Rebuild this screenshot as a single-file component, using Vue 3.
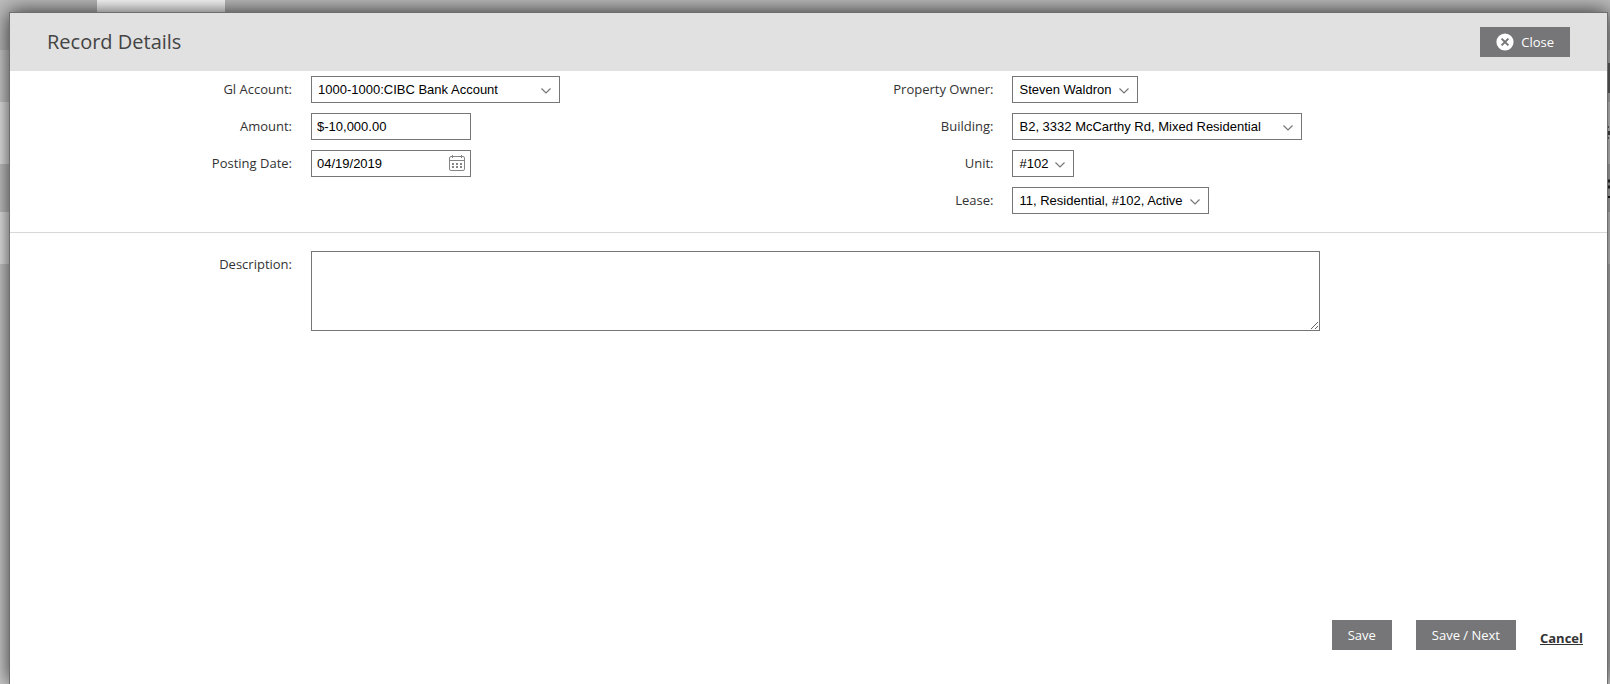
<script setup>
import { ref } from 'vue'

const account = ref('1000-1000:CIBC Bank Account')
const amount = ref('$-10,000.00')
const postingDate = ref('04/19/2019')
const description = ref('')

const related = ref([
  { id: 'owner', label: 'Property Owner:', value: 'Steven Waldron' },
  { id: 'building', label: 'Building:', value: 'B2, 3332 McCarthy Rd, Mixed Residential' },
  { id: 'unit', label: 'Unit:', value: '#102' },
  { id: 'lease', label: 'Lease:', value: '11, Residential, #102, Active' }
])
</script>

<template>
  <div class="page">
    <div class="backdrop" aria-hidden="true">
      <div class="band band-top"><span class="tab"></span></div>
      <div class="band band-head"><span class="chip"></span></div>
      <div class="band band-light">
        <svg width="2" height="62" viewBox="0 0 2 62">
          <path d="M0 25h1M0 36h1" stroke="#777" stroke-width="2" />
          <path d="M0 31h2" stroke="#555" stroke-width="4" />
        </svg>
      </div>
      <div class="band band-mid">
        <svg width="2" height="48" viewBox="0 0 2 48">
          <path d="M0 17h2M0 23h2" stroke="#333" stroke-width="3" />
          <path d="M0 33h2" stroke="#222" stroke-width="2" />
        </svg>
      </div>
      <div class="band band-light short"></div>
      <div class="band band-rest"></div>
    </div>

    <form class="modal" role="dialog" aria-labelledby="dialog-title" @submit.prevent>
      <header class="modal-header">
        <h1 id="dialog-title">Record Details</h1>
        <button type="button" class="btn btn-close">
          <svg width="18" height="18" viewBox="0 0 18 18" aria-hidden="true">
            <circle cx="9" cy="9" r="8.6" fill="#fff" />
            <path d="M5.6 5.6 12.4 12.4M12.4 5.6 5.6 12.4" stroke="#767678" stroke-width="2" />
          </svg>
          Close
        </button>
      </header>

      <section class="fields">
        <div class="column">
          <div class="row">
            <label for="account">Gl Account:</label>
            <div class="select account">
              <select id="account" v-model="account">
                <option>1000-1000:CIBC Bank Account</option>
              </select>
              <svg class="chevron" width="10" height="6" viewBox="0 0 10 6" aria-hidden="true">
                <path d="M.5 .5 5 5 9.5 .5" fill="none" stroke="#767678" stroke-width="1.2" />
              </svg>
            </div>
          </div>
          <div class="row">
            <label for="amount">Amount:</label>
            <input id="amount" v-model="amount" class="text" type="text" />
          </div>
          <div class="row">
            <label for="posting-date">Posting Date:</label>
            <div class="date">
              <input id="posting-date" v-model="postingDate" class="text" type="text" />
              <svg class="calendar" width="16" height="16" viewBox="0 0 16 16" aria-hidden="true">
                <rect x=".5" y="1.5" width="15" height="14" rx="1.5" fill="none" stroke="#858585" />
                <path d="M1 5.5H15" stroke="#858585" />
                <path d="M3.5 0V3M12.5 0V3" stroke="#858585" />
                <path
                  d="M3 9h2M7 9h2M11 9h2M3 12h2M7 12h2M11 12h2"
                  stroke="#858585"
                  stroke-width="2"
                />
              </svg>
            </div>
          </div>
        </div>

        <div class="column">
          <div v-for="item in related" :key="item.id" class="row">
            <label :for="item.id">{{ item.label }}</label>
            <div class="select" :class="item.id">
              <select :id="item.id" v-model="item.value">
                <option>{{ item.value }}</option>
              </select>
              <svg class="chevron" width="10" height="6" viewBox="0 0 10 6" aria-hidden="true">
                <path d="M.5 .5 5 5 9.5 .5" fill="none" stroke="#767678" stroke-width="1.2" />
              </svg>
            </div>
          </div>
        </div>
      </section>

      <section class="description">
        <label for="description">Description:</label>
        <textarea id="description" v-model="description"></textarea>
      </section>

      <footer class="actions">
        <button type="submit" class="btn">Save</button>
        <button type="button" class="btn">Save / Next</button>
        <a href="#">Cancel</a>
      </footer>
    </form>
  </div>
</template>

<style>
body {
  margin: 0;
}
</style>

<style scoped>
.page,
.page * {
  box-sizing: border-box;
}

.page {
  position: relative;
  display: flex;
  height: 100vh;
  overflow: hidden;
  padding: 12px 2px 0 9px;
  font: 13px/18px "Open Sans", sans-serif;
  color: #333;
}

.backdrop {
  position: absolute;
  inset: 0;
  display: flex;
  flex-direction: column;
}

.band {
  display: flex;
  justify-content: flex-end;
}

.band-top {
  height: 50px;
  justify-content: flex-start;
  background: #bdbdbd;
}

.band-head {
  height: 52px;
  background: #d0d0d0;
}

.band-light {
  height: 62px;
  background: #ededed;
}

.band-mid {
  height: 48px;
  background: #c9c9c9;
}

.short {
  height: 52px;
}

.band-rest {
  flex: 1;
  background: #cfcfcf;
}

.tab {
  width: 128px;
  height: 14px;
  margin-left: 97px;
  background: #fff;
}

.chip {
  width: 4px;
  height: 30px;
  margin-top: 13px;
  background: #707070;
}

.modal {
  position: relative;
  display: flex;
  flex: 1;
  flex-direction: column;
  border: 1px solid #6e6e70;
  border-bottom: 0;
  background: #fff;
  box-shadow: 0 0 20px rgba(0, 0, 0, 0.8);
}

.modal-header {
  display: flex;
  align-items: center;
  justify-content: space-between;
  height: 58px;
  padding: 0 37px;
  background: #e1e1e1;
}

h1 {
  margin: 0;
  font-size: 20px;
  font-weight: 400;
  line-height: 28px;
  color: #444;
}

.btn {
  height: 30px;
  padding: 0 16px;
  border: 0;
  border-radius: 0;
  background: #767678;
  color: #fff;
  font: 13px/18px "Open Sans", sans-serif;
}

.btn-close {
  display: flex;
  align-items: center;
  gap: 7px;
}

.fields {
  display: grid;
  grid-template-columns: 47fr 60fr;
  padding: 5px 0 18px;
  border-bottom: 1px solid #d8d8d8;
}

.column {
  display: flex;
  flex-direction: column;
  gap: 10px;
}

.row {
  display: flex;
  align-items: center;
  gap: 19px;
}

label {
  flex: none;
  width: 282px;
  text-align: right;
}

.row label {
  padding-bottom: 2px;
}

.select,
.date {
  position: relative;
}

.date,
.text {
  width: 160px;
}

.text,
select,
textarea {
  height: 27px;
  margin: 0;
  border: 1px solid #767678;
  border-radius: 0;
  background: #fff;
  color: #000;
  font: 13px/16px "Liberation Sans", Arial, sans-serif;
}

.text {
  padding: 0 5px;
}

select {
  display: block;
  width: 100%;
  padding: 0 20px 0 6px;
  appearance: none;
}

.account {
  width: 249px;
}

.owner {
  width: 126px;
}

.building {
  width: 290px;
}

.unit {
  width: 62px;
}

.lease {
  width: 197px;
}

.chevron {
  position: absolute;
  top: 12px;
  right: 9px;
  pointer-events: none;
}

.calendar {
  position: absolute;
  top: 5px;
  right: 6px;
}

.date .text {
  display: block;
}

.description {
  display: flex;
  gap: 19px;
  padding: 18px 18% 0 0;
}

.description label {
  padding-top: 4px;
}

textarea {
  flex: 1;
  height: 80px;
  padding: 4px;
}

.actions {
  display: flex;
  align-items: flex-start;
  gap: 24px;
  margin-top: auto;
  padding: 0 24px 34px;
  justify-content: flex-end;
}

.actions a {
  padding-top: 9px;
  color: #333;
  font-weight: 700;
}
</style>
